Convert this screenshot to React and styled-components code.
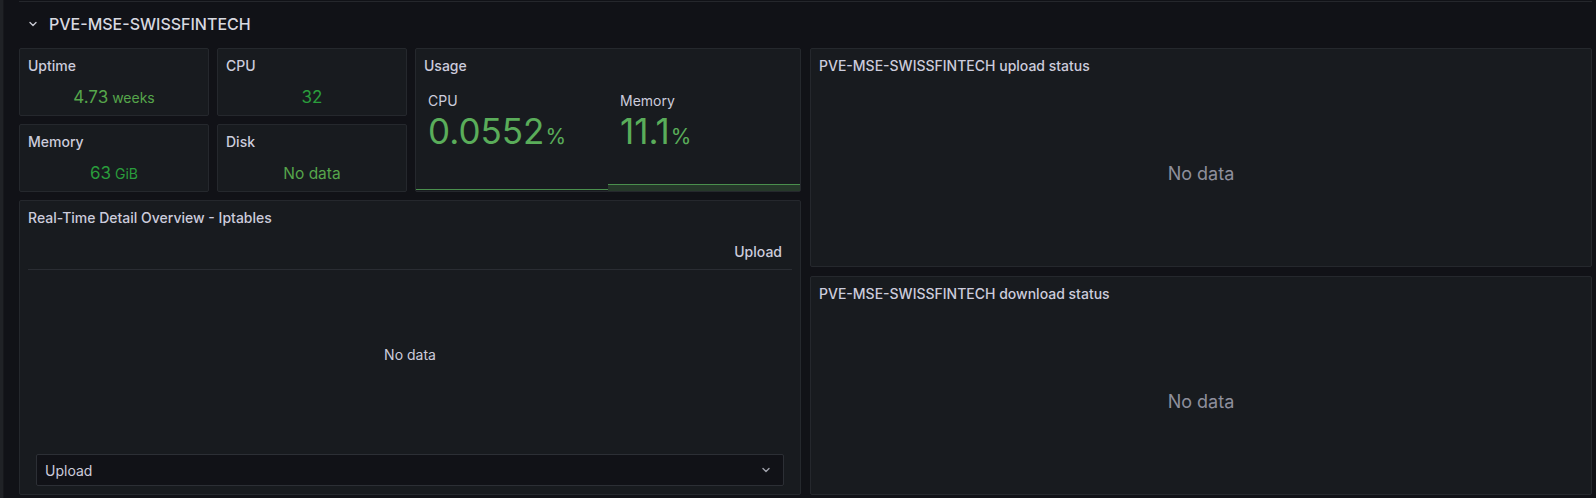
import React from 'react';
import styled, { createGlobalStyle } from 'styled-components';

const GlobalStyle = createGlobalStyle`
  html, body {
    margin: 0;
    padding: 0;
    background: #111217;
    font-family: Inter, "Noto Sans", sans-serif;
    color: #ccccdc;
  }
`

const Page = styled.div`
  display: flex;
  width: 1596px;
  height: 498px;
  overflow: hidden;
  background: #111217;
`

const SideEdge = styled.div`
  width: 3px;
  background: #202226;
  border-right: 1px solid #17181c;
`

const Main = styled.div`
  flex: 1;
  padding: 0 4px 0 15px;
  display: flex;
  flex-direction: column;
`

const TopRule = styled.div`
  height: 1px;
  margin-top: 1px;
  background: #25272c;
`

const RowHeader = styled.div`
  height: 44px;
  display: flex;
  align-items: center;
  gap: 11px;
  padding-left: 9px;
  margin-bottom: 2px;
`

const RowTitle = styled.span`
  font-size: 16px;
  font-weight: 500;
  color: #d8d9e0;
`

const Grid = styled.div`
  display: grid;
  grid-template-columns: 1fr 1fr;
  column-gap: 9px;
  height: 447px;
`

const Column = styled.div`
  display: flex;
  flex-direction: column;
  gap: ${p => p.$gap}px;
  min-height: 0;
`

const StatGrid = styled.div`
  display: grid;
  grid-template-columns: 190px 190px 1fr;
  grid-template-rows: 68px 68px;
  gap: 8px;
`

const Panel = styled.div`
  background: #181b1f;
  border: 1px solid #25282d;
  border-radius: 2px;
  display: flex;
  flex-direction: column;
  min-height: 0;
  flex: ${p => p.$flex || 'none'};
  grid-row: ${p => p.$rows || 'auto'};
  grid-column: ${p => p.$cols || 'auto'};
`

const PanelHeader = styled.div`
  height: 32px;
  flex-shrink: 0;
  display: flex;
  align-items: center;
  padding: 0 8px;
  font-size: 14px;
  font-weight: 500;
  color: #ccccdc;
`

const StatBody = styled.div`
  flex: 1;
  display: flex;
  align-items: center;
  justify-content: center;
  padding-bottom: 2px;
`

const StatValue = styled.span`
  font-size: ${p => p.$size || 17}px;
  font-weight: 400;
  color: ${p => p.$color};
`

const StatUnit = styled.span`
  font-size: 14px;
  margin-left: 4px;
`

const UsageBody = styled.div`
  flex: 1;
  display: flex;
`

const UsageCell = styled.div`
  flex: 1;
  display: flex;
  flex-direction: column;
  position: relative;
  padding: 11px 12px 0;
`

const UsageLabel = styled.div`
  font-size: 14px;
  color: #ccccdc;
  line-height: 18px;
`

const UsageValue = styled.div`
  font-size: 35px;
  line-height: 40px;
  color: #5aad5a;
  margin-top: 1px;
`

const UsageUnit = styled.span`
  font-size: 21px;
  margin-left: 1px;
`

const Spark = styled.div`
  position: absolute;
  left: 0;
  right: 0;
  bottom: 0;
  height: ${p => p.$h}px;
  background: ${p => p.$fill};
  border-top: 1px solid #4a8f4d;
`

const TableWrap = styled.div`
  flex: 1;
  display: flex;
  flex-direction: column;
  padding: 0 8px;
  min-height: 0;
`

const TableHead = styled.div`
  height: 36px;
  display: flex;
  align-items: center;
  justify-content: flex-end;
  padding-right: 10px;
  border-bottom: 1px solid #2a2d33;
  font-size: 14px;
  font-weight: 500;
  color: #ccccdc;
`

const Empty = styled.div`
  flex: 1;
  display: flex;
  align-items: center;
  justify-content: center;
  padding-bottom: ${p => p.$lift || 0}px;
  font-size: ${p => p.$size}px;
  color: ${p => p.$color};
`

const Footer = styled.div`
  padding: 8px;
`

const Select = styled.div`
  height: 30px;
  border: 1px solid #2c2f35;
  border-radius: 2px;
  background: #111217;
  display: flex;
  align-items: center;
  justify-content: space-between;
  padding: 0 12px 0 8px;
  font-size: 14px;
  color: #ccccdc;
`

const Chevron = ({ size = 10, color = '#ccccdc' }) => (
  <svg width={size} height={size} viewBox="0 0 10 10" fill="none">
    <path d="M2 3.5 L5 6.5 L8 3.5" stroke={color} strokeWidth="1.4" strokeLinecap="round" strokeLinejoin="round" />
  </svg>
)

const StatPanel = ({ title, value, unit, color, size }) => (
  <Panel>
    <PanelHeader>{title}</PanelHeader>
    <StatBody>
      <StatValue $color={color} $size={size}>
        {value}
        {unit && <StatUnit>{unit}</StatUnit>}
      </StatValue>
    </StatBody>
  </Panel>
)

export default function App() {
  return (
    <Page>
      <GlobalStyle />
      <SideEdge />
      <Main>
        <TopRule />
        <RowHeader>
          <Chevron size={10} color="#c7c8d2" />
          <RowTitle>PVE-MSE-SWISSFINTECH</RowTitle>
        </RowHeader>
        <Grid>
          <Column $gap={8}>
            <StatGrid>
              <StatPanel title="Uptime" value="4.73" unit="weeks" color="#56a64b" />
              <StatPanel title="CPU" value="32" color="#2a9d3c" />
              <Panel $rows="1 / span 2" $cols="3">
                <PanelHeader>Usage</PanelHeader>
                <UsageBody>
                  <UsageCell>
                    <UsageLabel>CPU</UsageLabel>
                    <UsageValue>0.0552<UsageUnit>%</UsageUnit></UsageValue>
                    <Spark $h={1} $fill="transparent" />
                  </UsageCell>
                  <UsageCell>
                    <UsageLabel>Memory</UsageLabel>
                    <UsageValue>11.1<UsageUnit>%</UsageUnit></UsageValue>
                    <Spark $h={6} $fill="#26382a" />
                  </UsageCell>
                </UsageBody>
              </Panel>
              <StatPanel title="Memory" value="63" unit="GiB" color="#2a9d3c" />
              <StatPanel title="Disk" value="No data" color="#56a64b" size={15.5} />
            </StatGrid>
            <Panel $flex="1">
              <PanelHeader>Real-Time Detail Overview - Iptables</PanelHeader>
              <TableWrap>
                <TableHead>Upload</TableHead>
                <Empty $size={14} $color="#ccccdc" $lift={8}>No data</Empty>
                <Footer>
                  <Select>
                    <span>Upload</span>
                    <Chevron size={10} color="#9fa1ab" />
                  </Select>
                </Footer>
              </TableWrap>
            </Panel>
          </Column>
          <Column $gap={9}>
            <Panel $flex="1">
              <PanelHeader>PVE-MSE-SWISSFINTECH upload status</PanelHeader>
              <Empty $size={18} $color="#8e8f9c">No data</Empty>
            </Panel>
            <Panel $flex="1">
              <PanelHeader>PVE-MSE-SWISSFINTECH download status</PanelHeader>
              <Empty $size={18} $color="#8e8f9c">No data</Empty>
            </Panel>
          </Column>
        </Grid>
      </Main>
    </Page>
  )
}
